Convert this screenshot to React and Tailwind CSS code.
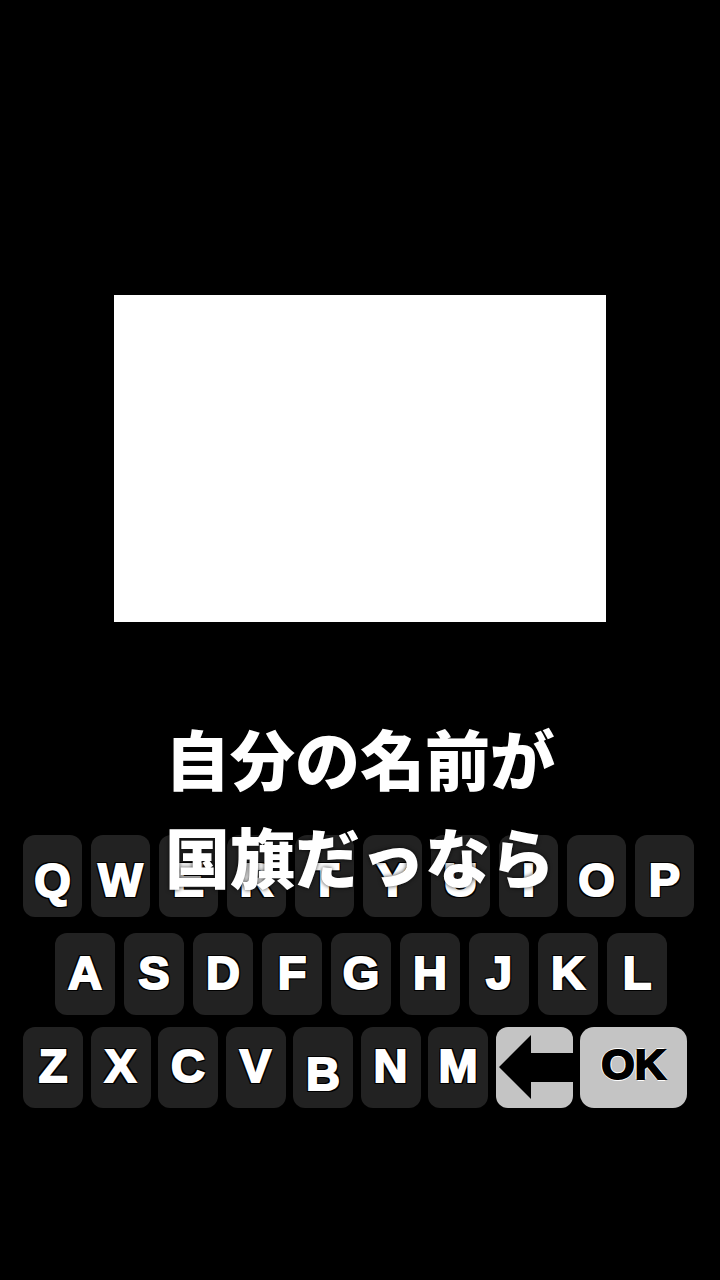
import React from "react";

const letterCls =
  "text-white font-bold text-[47px] leading-none [-webkit-text-stroke:2px_white] [text-shadow:2px_0_0_#000,-2px_0_0_#000,0_2px_0_#000,0_-2px_0_#000,2px_2px_0_#000,-2px_2px_0_#000,2px_-2px_0_#000,-2px_-2px_0_#000] [font-family:'Liberation_Sans',Arial,sans-serif]";

function Key({ ch, w = "w-[59px]", h = "h-[82px]", extra = "" }) {
  return (
    <div className={`${w} ${h} rounded-[12px] bg-[#222222] flex items-center justify-center shrink-0`}>
      <span className={`${letterCls} ${extra}`}>{ch}</span>
    </div>
  );
}

export default function App() {
  const row1 = ["Q", "W", "E", "R", "T", "Y", "U", "I", "O", "P"];
  const row2 = ["A", "S", "D", "F", "G", "H", "J", "K", "L"];
  const row3 = ["Z", "X", "C", "V", "B", "N", "M"];
  return (
    <div className="relative w-[720px] h-[1280px] bg-black overflow-hidden flex flex-col">
      <div className="mt-[295px] ml-[114px] w-[492px] h-[327px] bg-white" />

      <div className="mt-[213px] flex flex-col">
        <div className="flex pl-[23px] gap-[9px]">
          {row1.map((c) => (
            <Key key={c} ch={c} extra="translate-y-[3px]" />
          ))}
        </div>
        <div className="flex pl-[55px] gap-[9px] mt-[16px]">
          {row2.map((c) => (
            <Key key={c} ch={c} w="w-[60px]" extra="-translate-y-[2px]" />
          ))}
        </div>
        <div className="flex pl-[23px] gap-[7.5px] mt-[12px]">
          {row3.map((c) => (
            <Key
              key={c}
              ch={c}
              w="w-[60px]"
              h="h-[81px]"
              extra={c === "B" ? "translate-y-[6px]" : "-translate-y-[2px]"}
            />
          ))}
          <div className="w-[77px] h-[81px] rounded-[12px] bg-[#c4c4c4] overflow-hidden shrink-0">
            <svg width="77" height="81" viewBox="0 0 77 81">
              <polygon points="3,40 35,8 35,26 77,26 77,55 35,55 35,72" fill="#000" />
            </svg>
          </div>
          <div className="w-[107px] h-[81px] rounded-[14px] bg-[#c4c4c4] flex items-center justify-center shrink-0">
            <span className="text-black font-bold text-[43px] leading-none [-webkit-text-stroke:2px_black] [text-shadow:2px_0_0_#fff,-2px_0_0_#fff,0_2px_0_#fff,0_-2px_0_#fff] [font-family:'Liberation_Sans',Arial,sans-serif] -mt-[6px]">
              OK
            </span>
          </div>
        </div>
      </div>

      <div className="absolute left-0 right-0 top-[708px] flex flex-col items-center text-white font-black text-[65px] leading-[98px] [font-family:'Noto_Sans_CJK_JP','Noto_Sans_CJK_SC',sans-serif] [text-shadow:0_0_4px_rgba(0,0,0,0.8)]">
        <div>自分の名前が</div>
        <div>国旗だっなら</div>
      </div>
    </div>
  );
}
